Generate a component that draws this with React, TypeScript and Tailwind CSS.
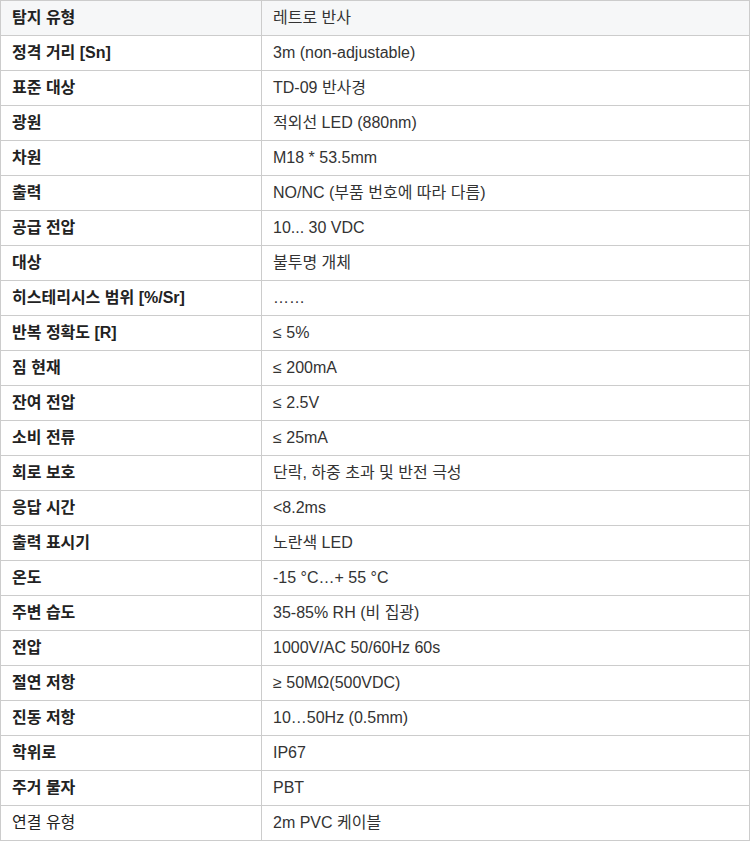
const rows: [string, string][] = [
  ["탐지 유형", "레트로 반사"],
  ["정격 거리 [Sn]", "3m (non-adjustable)"],
  ["표준 대상", "TD-09 반사경"],
  ["광원", "적외선 LED (880nm)"],
  ["차원", "M18 * 53.5mm"],
  ["출력", "NO/NC (부품 번호에 따라 다름)"],
  ["공급 전압", "10... 30 VDC"],
  ["대상", "불투명 개체"],
  ["히스테리시스 범위 [%/Sr]", "……"],
  ["반복 정확도 [R]", "≤ 5%"],
  ["짐 현재", "≤ 200mA"],
  ["잔여 전압", "≤ 2.5V"],
  ["소비 전류", "≤ 25mA"],
  ["회로 보호", "단락, 하중 초과 및 반전 극성"],
  ["응답 시간", "<8.2ms"],
  ["출력 표시기", "노란색 LED"],
  ["온도", "-15 °C…+ 55 °C"],
  ["주변 습도", "35-85% RH (비 집광)"],
  ["전압", "1000V/AC 50/60Hz 60s"],
  ["절연 저항", "≥ 50MΩ(500VDC)"],
  ["진동 저항", "10…50Hz (0.5mm)"],
  ["학위로", "IP67"],
  ["주거 물자", "PBT"],
  ["연결 유형", "2m PVC 케이블"],
]

export default function App() {
  return (
    <div className="w-[750px] bg-white font-['Liberation_Sans','Noto_Sans_CJK_KR',sans-serif] text-[16px] text-[#333]">
      <table className="w-full border-collapse border border-[#cccccc]">
        <tbody>
          {rows.map(([label, value], i) => (
            <tr key={label} className={i === 0 ? "bg-[#f6f7f8]" : "bg-white"}>
              <td
                className={`w-[261px] h-[35px] border border-[#cccccc] px-[11px] py-0 align-middle text-[#222] ${
                  i === rows.length - 1 ? "font-normal" : "font-bold"
                }`}
              >
                {label}
              </td>
              <td className="h-[35px] border border-[#cccccc] px-[11px] py-0 align-middle">{value}</td>
            </tr>
          ))}
        </tbody>
      </table>
    </div>
  )
}
